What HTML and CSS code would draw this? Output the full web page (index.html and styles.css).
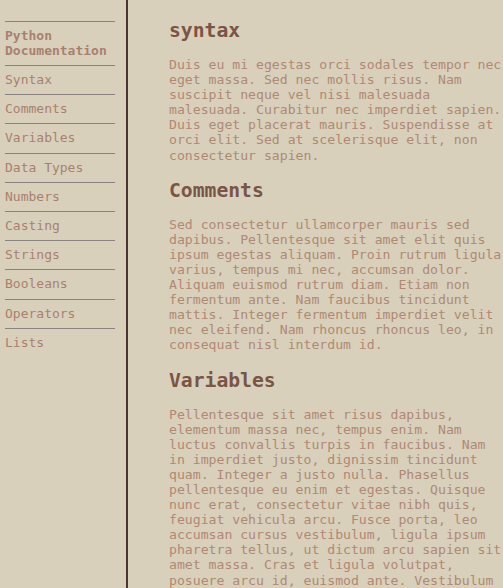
FILE: index.html
```html
<!DOCTYPE html>
<html lang="en">
<head>
<meta charset="utf-8">
<title>Python Documentation</title>
<link rel="stylesheet" href="styles.css">
</head>
<body>
<nav class="navbar">
  <header class="nav-title">Python Documentation</header>
  <a class="nav-link" href="#syntax">Syntax</a>
  <a class="nav-link" href="#comments">Comments</a>
  <a class="nav-link" href="#variables">Variables</a>
  <a class="nav-link" href="#data-types">Data Types</a>
  <a class="nav-link" href="#numbers">Numbers</a>
  <a class="nav-link" href="#casting">Casting</a>
  <a class="nav-link" href="#strings">Strings</a>
  <a class="nav-link" href="#booleans">Booleans</a>
  <a class="nav-link" href="#operators">Operators</a>
  <a class="nav-link" href="#lists">Lists</a>
</nav>
<main class="main-doc">
  <section class="main-section" id="syntax">
    <h2 class="section-title">syntax</h2>
    <p class="section-text">Duis eu mi egestas orci sodales tempor nec eget massa. Sed nec mollis risus. Nam suscipit neque vel nisi malesuada malesuada. Curabitur nec imperdiet sapien. Duis eget placerat mauris. Suspendisse at orci elit. Sed at scelerisque elit, non consectetur sapien.</p>
  </section>
  <section class="main-section" id="comments">
    <h2 class="section-title">Comments</h2>
    <p class="section-text">Sed consectetur ullamcorper mauris sed dapibus. Pellentesque sit amet elit quis ipsum egestas aliquam. Proin rutrum ligula varius, tempus mi nec, accumsan dolor. Aliquam euismod rutrum diam. Etiam non fermentum ante. Nam faucibus tincidunt mattis. Integer fermentum imperdiet velit nec eleifend. Nam rhoncus rhoncus leo, in consequat nisl interdum id.</p>
  </section>
  <section class="main-section" id="variables">
    <h2 class="section-title">Variables</h2>
    <p class="section-text">Pellentesque sit amet risus dapibus, elementum massa nec, tempus enim. Nam luctus convallis turpis in faucibus. Nam in imperdiet justo, dignissim tincidunt quam. Integer a justo nulla. Phasellus pellentesque eu enim et egestas. Quisque nunc erat, consectetur vitae nibh quis, feugiat vehicula arcu. Fusce porta, leo accumsan cursus vestibulum, ligula ipsum pharetra tellus, ut dictum arcu sapien sit amet massa. Cras et ligula volutpat, posuere arcu id, euismod ante. Vestibulum ante ipsum primis in faucibus orci luctus et ultrices posuere cubilia curae.</p>
  </section>
</main>
</body>
</html>
```
FILE: styles.css
```css
html, body {
  margin: 0;
  padding: 0;
}
body {
  background: #d9d0bb;
  font-family: "DejaVu Sans Mono", monospace;
  font-size: 13px;
  color: #b08874;
  display: flex;
  align-items: stretch;
  min-height: 100vh;
  overflow-x: hidden;
}
.navbar {
  flex: 0 0 121px;
  padding: 21px 0 0 5px;
  border-right: 2px solid #4a3434;
  display: flex;
  flex-direction: column;
}
.nav-title {
  width: 110px;
  border-top: 1px solid #8a8282;
  padding: 6px 0 7px;
  font-weight: bold;
  color: #a98070;
  line-height: 15px;
}
.nav-link {
  width: 110px;
  border-top: 1px solid #8a8282;
  padding: 6px 0 7.2px;
  line-height: 15px;
  color: #a98070;
  text-decoration: none;
}
.main-doc {
  flex: 1 1 auto;
  min-width: 0;
  padding: 19px 0 0 41px;
}
.main-section {
  margin-bottom: 16px;
}
.section-title {
  margin: 0 0 15px;
  font-size: 19.7px;
  line-height: 23px;
  color: #7a5546;
}
.section-text {
  margin: 0;
  font-size: 13.15px;
  line-height: 15.1px;
}
```
